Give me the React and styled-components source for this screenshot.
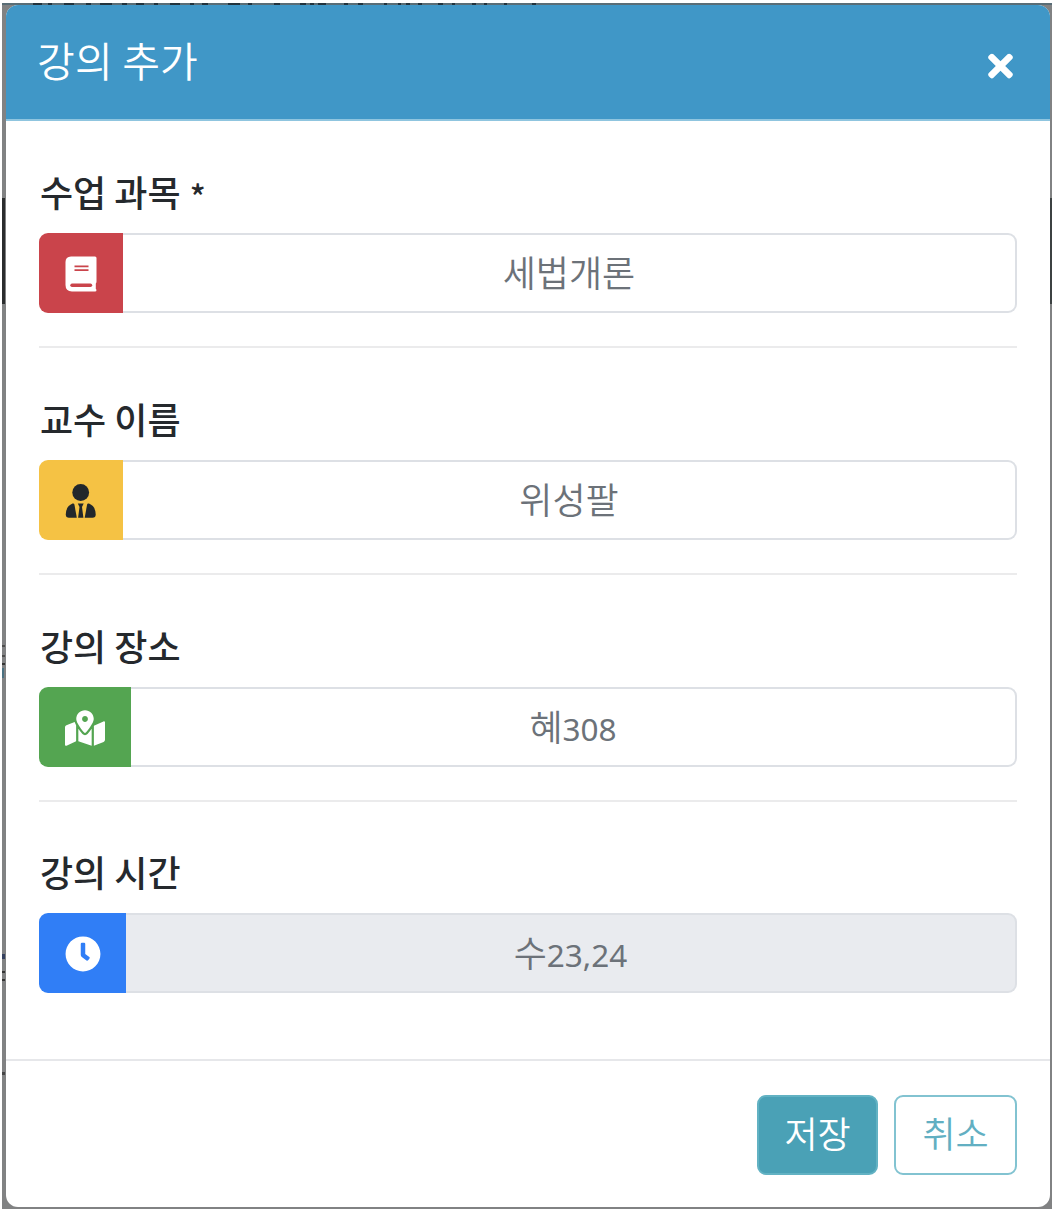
import React from "react";
import styled, { createGlobalStyle } from "styled-components";
import { FaMapMarkedAlt, FaClock, FaTimes } from "react-icons/fa";

const GlobalStyle = createGlobalStyle`
  * { box-sizing: border-box; }
  body { margin: 0; background: #fff; }
  button, input { font: inherit; }
`;

const smudge = (color, x, y, w, h) =>
  `linear-gradient(${color}, ${color}) ${x}px ${y}px / ${w}px ${h}px no-repeat`;

const topMarks = [
  [31, 9], [46, 4], [62, 10], [84, 5], [98, 12], [120, 5], [134, 8], [152, 4], [168, 10],
  [188, 4], [200, 6], [226, 12], [246, 4], [272, 6], [298, 6], [308, 4], [316, 8],
  [342, 4], [356, 5], [382, 3], [396, 3], [404, 4], [416, 4], [436, 5], [450, 3],
  [470, 4], [482, 3], [502, 3], [530, 4],
].map(([x, w]) => smudge("#22333d", x, 0, w, 2));

const edgeMarks = [
  smudge("#2a2c2d", 0, 195, 3, 106),
  smudge("#3c4142", 1048, 195, 2, 106),
  smudge("#4d4d4d", 0, 642, 3, 2),
  smudge("#4d4d4d", 0, 652, 3, 2),
  smudge("#333", 0, 660, 3, 2),
  smudge("#4a7080", 0, 665, 2, 10),
  smudge("#34405e", 0, 951, 3, 5),
  smudge("#333", 0, 968, 3, 2),
  smudge("#333", 0, 976, 3, 2),
  smudge("#444", 0, 1069, 3, 3),
];

const Page = styled.main`
  width: 1056px;
  height: 1212px;
  padding: 3px 4px 3px 2px;
  background: #fff;
  font-family: "Noto Sans CJK KR", sans-serif;
`;

const Backdrop = styled.div`
  height: 100%;
  padding: 2px 2px 2px 4px;
  background: ${[...topMarks, ...edgeMarks].join(", ")},
    linear-gradient(#596d76, #596d76) 0 0 / 100% 2px no-repeat, #818283;
`;

const Dialog = styled.section`
  display: flex;
  flex-direction: column;
  height: 100%;
  border-radius: 12px;
  overflow: hidden;
  background: #fff;
`;

const Header = styled.header`
  display: flex;
  align-items: center;
  justify-content: space-between;
  height: 116px;
  padding: 0 37px 0 31px;
  background: #4097c7;
  border-bottom: 2px solid #8fc5df;
  color: #fff;
`;

const Title = styled.h1`
  margin: 0 0 6px;
  font-size: 41px;
  font-weight: 350;
  line-height: 60px;
  letter-spacing: 0.2px;
`;

const CloseButton = styled.button`
  display: flex;
  margin: 7px 0 0;
  padding: 0;
  border: 0;
  background: none;
  color: #fff;
  font-size: 36px;

  svg {
    width: 25px;
  }
`;

const Body = styled.div`
  flex: none;
  height: 938px;
  padding: 46px 33px 0;
`;

const Field = styled.div`
  height: 226.8px;
`;

const Label = styled.label`
  display: block;
  height: 66px;
  line-height: 49px;
  padding-left: 1px;
  font-size: 36px;
  font-weight: 500;
  color: #25292d;
  white-space: pre;
`;

const Required = styled.span`
  position: relative;
  top: 3px;
  left: 1px;
  font-size: 33px;
  line-height: 1;
`;

const InputGroup = styled.div`
  display: flex;
  height: 80px;
  margin-bottom: 33px;
`;

const Addon = styled.span`
  display: flex;
  align-items: center;
  justify-content: center;
  flex: none;
  width: ${(p) => p.$width}px;
  border-radius: 9px 0 0 9px;
  background: ${(p) => p.$bg};
  color: ${(p) => p.$fg || "#fff"};

  svg {
    width: ${(p) => p.$iconWidth}px;
    height: 36px;
    margin-top: 2px;
  }
`;

const Value = styled.div`
  flex: 1;
  border: 2px solid #dde0e5;
  border-left: 0;
  border-radius: 0 9px 9px 0;
  background: ${(p) => (p.$disabled ? "#e9ebef" : "#fff")};
  font-size: 36px;
  font-weight: 350;
  line-height: 72px;
  text-align: center;
  color: #6c7279;
`;

const Digits = styled.span`
  font-family: "Noto Sans", sans-serif;
  font-size: 31.5px;
  font-weight: 400;
`;

const Divider = styled.hr`
  height: 2px;
  margin: 0;
  border: 0;
  background: #ebebec;
`;

const Footer = styled.footer`
  display: flex;
  justify-content: flex-end;
  gap: 16px;
  flex: 1;
  padding: 34px 33px 0 0;
  border-top: 2px solid #e6e7ea;
`;

const Button = styled.button`
  width: ${(p) => p.$width}px;
  height: 80px;
  padding: 0 0 6px;
  border: 2px solid ${(p) => (p.$outline ? "#82c3d1" : "#62b2c3")};
  border-radius: 9px;
  background: ${(p) => (p.$outline ? "#fff" : "#4aa1b6")};
  color: ${(p) => (p.$outline ? "#62afc2" : "#fff")};
  font-size: 36px;
  font-weight: 350;
  line-height: 70px;
`;

const BookIcon = () => (
  <svg viewBox="0 0 32 36" fill="none">
    <path d="M6 0.5H30Q31.5 0.5 31.5 2V25.5Q31.5 27 30.8 27.6V33Q31.5 33.4 31.5 34Q31.5 35.5 30 35.5H7Q0.5 35 0.5 29V6Q0.5 0.8 6 0.5Z" fill="currentColor" />
    <path d="M9.5 10.3H23.5M9.5 14.2H23.5" stroke="#ca444b" strokeWidth="1.8" />
    <path d="M7 29.3H25.5" stroke="#ca444b" strokeWidth="3.4" strokeLinecap="round" />
  </svg>
);

const UserTieIcon = () => (
  <svg viewBox="0 0 32 36" fill="currentColor">
    <circle cx="15.7" cy="9.5" r="8.4" />
    <path d="M7.5 20.6Q9 20 9.4 21.5L11.8 34.7H4Q0.8 34.7 0.8 31.5Q0.8 23.5 7.5 20.6Z" />
    <path d="M24 20.6Q22.5 20 22.1 21.5L19.7 34.7H27.5Q30.7 34.7 30.7 31.5Q30.7 23.5 24 20.6Z" />
    <path d="M12.8 20.5H18.7L17 24L18.4 34.7H13.1L14.5 24Z" />
  </svg>
);

const fields = [
  { label: "수업 과목 ", required: true, text: "세법개론", icon: BookIcon, iconWidth: 32, bg: "#ca444b", width: 84 },
  { label: "교수 이름", text: "위성팔", icon: UserTieIcon, iconWidth: 32, bg: "#f5c244", fg: "#22272b", width: 84 },
  { label: "강의 장소", text: "혜", digits: "308", icon: FaMapMarkedAlt, iconWidth: 40, bg: "#54a551", width: 92 },
  { label: "강의 시간", text: "수", digits: "23,24", icon: FaClock, iconWidth: 36, bg: "#307ef6", width: 87, disabled: true },
];

export default function App() {
  return (
    <Page>
      <GlobalStyle />
      <Backdrop>
        <Dialog>
          <Header>
            <Title>강의 추가</Title>
            <CloseButton aria-label="닫기">
              <FaTimes />
            </CloseButton>
          </Header>
          <Body>
            {fields.map(({ label, required, text, digits, icon: Icon, iconWidth, bg, fg, width, disabled }, i) => (
              <Field key={label}>
                <Label>
                  {label}
                  {required && <Required>*</Required>}
                </Label>
                <InputGroup>
                  <Addon $width={width} $iconWidth={iconWidth} $bg={bg} $fg={fg}><Icon /></Addon>
                  <Value $disabled={disabled}>
                    {text}
                    {digits && <Digits>{digits}</Digits>}
                  </Value>
                </InputGroup>
                {i < fields.length - 1 && <Divider />}
              </Field>
            ))}
          </Body>
          <Footer>
            <Button $width={121}>저장</Button>
            <Button $width={123} $outline>취소</Button>
          </Footer>
        </Dialog>
      </Backdrop>
    </Page>
  );
}
